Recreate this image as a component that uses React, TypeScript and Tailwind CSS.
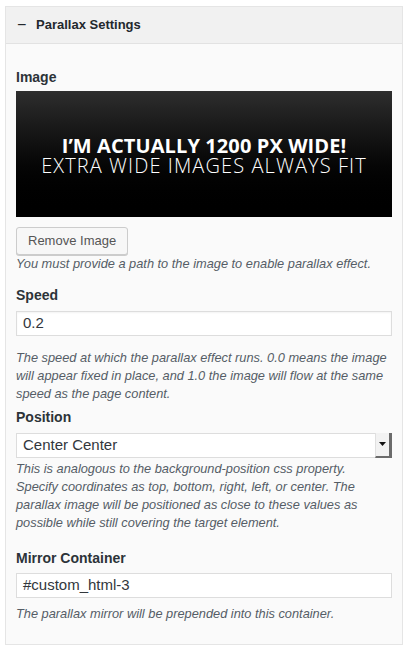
import React from "react";

const ui = { fontFamily: '"Liberation Sans", Arial, sans-serif' };

function Label({ children }: { children: React.ReactNode }) {
  return (
    <div className="text-[14px] font-bold leading-[20px] text-[#2c3338]" style={ui}>
      {children}
    </div>
  );
}

function Desc({ lines, className = "" }: { lines: string[]; className?: string }) {
  return (
    <p className={"text-[12.8px] italic leading-[18px] text-[#555d66] " + className} style={ui}>
      {lines.map((l, i) => (
        <span key={i} className="block whitespace-nowrap">{l}</span>
      ))}
    </p>
  );
}

export default function App() {
  return (
    <div className="w-[408px] h-[652px] bg-white pt-[6px] pl-[5px]" style={ui}>
      <div className="w-[398px] h-[639px] border border-[#e5e5e5] bg-[#fafafa] flex flex-col">
        <div className="h-[37px] flex items-center bg-[#f1f1f1] border-b border-[#e2e2e2] pl-[11px] text-[13px] font-bold text-[#23282d]">
          <span className="w-[19px] font-normal text-[16px] leading-none">−</span>
          <span>Parallax Settings</span>
        </div>
        <div className="px-[10px] pt-[23px] flex flex-col">
          <Label>Image</Label>
          <div className="mt-[4px] h-[126px] w-full pt-[4px] bg-gradient-to-b from-[#2e2e2e] to-[#000000] flex flex-col items-center justify-center text-white" style={{ fontFamily: '"Open Sans", sans-serif' }}>
            <div className="text-[20px] font-bold leading-[20px] tracking-[0.1px]">I’M ACTUALLY 1200 PX WIDE!</div>
            <div className="text-[20px] font-light leading-[20px] tracking-[1.1px]">EXTRA WIDE IMAGES ALWAYS FIT</div>
          </div>
          <div className="mt-[10px]">
            <button className="h-[28px] px-[11px] rounded-[3px] border border-[#cccccc] bg-[#f7f7f7] text-[13px] text-[#555] shadow-[0_1px_0_#cccccc]" style={ui}>
              Remove Image
            </button>
          </div>
          <Desc lines={["You must provide a path to the image to enable parallax effect."]} />

          <div className="mt-[12px]"><Label>Speed</Label></div>
          <div className="mt-[6px] h-[25px] border border-[#dddddd] bg-white flex items-center pl-[6px] text-[15px] text-[#32373c] shadow-[inset_0_1px_2px_rgba(0,0,0,0.05)]">
            0.2
          </div>
          <Desc
            className="mt-[13px]"
            lines={[
              "The speed at which the parallax effect runs. 0.0 means the image",
              "will appear fixed in place, and 1.0 the image will flow at the same",
              "speed as the page content.",
            ]}
          />

          <div className="mt-[4px]"><Label>Position</Label></div>
          <div className="mt-[6px] h-[25px] border border-[#dddddd] bg-white flex items-center text-[15px] text-[#32373c]">
            <span className="flex-1 pl-[6px]">Center Center</span>
            <span className="w-[17px] h-[25px] -mt-[1px] -mr-[1px] bg-[#f2f2f2] border-r-[3px] border-b-[2px] border-[#6b6b6b] border-l border-l-[#e0e0e0] flex items-center justify-center">
              <svg width="7" height="4" viewBox="0 0 7 4"><path d="M0 0 H7 L3.5 4 Z" fill="#111" /></svg>
            </span>
          </div>
          <Desc
            className="mt-[2px]"
            lines={[
              "This is analogous to the background-position css property.",
              "Specify coordinates as top, bottom, right, left, or center. The",
              "parallax image will be positioned as close to these values as",
              "possible while still covering the target element.",
            ]}
          />

          <div className="mt-[16px]"><Label>Mirror Container</Label></div>
          <div className="mt-[5px] h-[25px] border border-[#dddddd] bg-white flex items-center pl-[6px] text-[15px] text-[#32373c]">
            #custom_html-3
          </div>
          <Desc className="mt-[7px]" lines={["The parallax mirror will be prepended into this container."]} />
        </div>
      </div>
    </div>
  );
}
